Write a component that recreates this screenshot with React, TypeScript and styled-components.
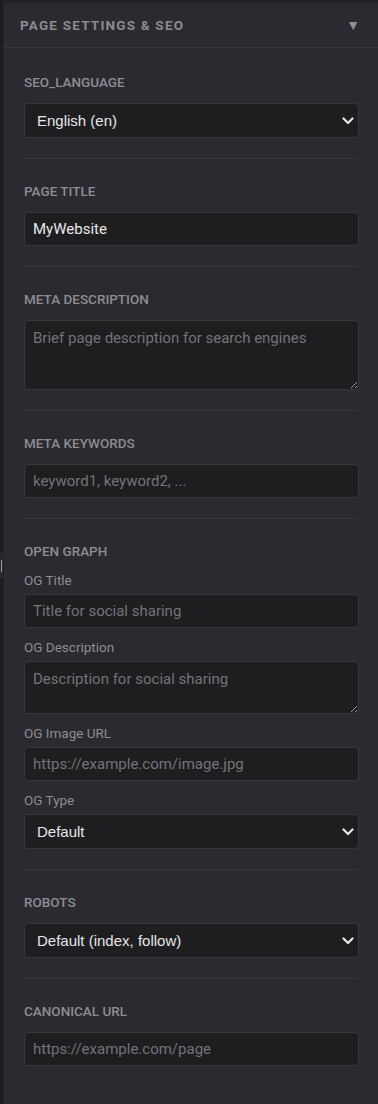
import React from "react";
import styled, { createGlobalStyle } from "styled-components";

const GlobalStyle = createGlobalStyle`
  html, body {
    margin: 0;
    padding: 0;
    background: #1d1d21;
  }

  * {
    box-sizing: border-box;
  }
`;

const Shell = styled.div`
  display: flex;
  min-height: 1104px;
  font-family: Roboto, "Liberation Sans", sans-serif;
`;

const Gutter = styled.div`
  width: 4px;
  flex-shrink: 0;
  background: #1d1d21;
  border-right: 1px solid #232328;
  display: flex;
  flex-direction: column;
`;

const GutterHandle = styled.div`
  margin-top: 553px;
  height: 25px;
  background: #2a2a2f;
  display: flex;
  justify-content: center;
  align-items: center;

  &::after {
    content: "";
    width: 1px;
    height: 12px;
    background: #9a9a9e;
  }
`;

const Panel = styled.div`
  flex: 1;
  background: #2a2a30;
  border-top: 3px solid #232327;
`;

const Header = styled.div`
  height: 45px;
  padding: 0 16px;
  display: flex;
  align-items: center;
  justify-content: space-between;
  border-bottom: 1px solid #37373d;
`;

const HeaderTitle = styled.div`
  font-size: 13.5px;
  font-weight: 700;
  letter-spacing: 1.2px;
  color: #8b8b90;
  text-transform: uppercase;
`;

const Caret = styled.span`
  font-size: 14px;
  color: #8e8e93;
  margin-right: 2px;
`;

const Body = styled.div`
  padding: 2px 19px 0 20px;
`;

const Section = styled.div<{ $last?: boolean }>`
  padding: 24px 0 20px;
  border-bottom: ${({ $last }) => ($last ? "none" : "1px solid #37373d")};
  display: flex;
  flex-direction: column;
`;

const Label = styled.div`
  font-size: 13.5px;
  line-height: 16px;
  font-weight: 500;
  color: #8d8d92;
  text-transform: uppercase;
  margin-bottom: 13px;
`;

const Field = styled.div`
  display: flex;
  flex-direction: column;

  & + & {
    margin-top: 11px;
  }
`;

const SubLabel = styled.div`
  font-size: 13.5px;
  line-height: 16px;
  color: #8d8d92;
  margin-bottom: 6px;
`;

const inputBase = `
  width: 100%;
  background: #1e1e21;
  border: 1px solid #38383e;
  border-radius: 4px;
  color: #e8e8ea;
  font-family: Roboto, "Liberation Sans", sans-serif;
  font-size: 15px;
  padding: 0 8px;
  outline: none;

  &::placeholder {
    color: #737378;
  }
`;

const TextInput = styled.input`
  ${inputBase}
  height: 34px;
`;

const TextArea = styled.textarea<{ $rows: number }>`
  ${inputBase}
  height: ${({ $rows }) => ($rows > 2 ? "70px" : "53px")};
  padding: 7px 8px;
  line-height: 20px;
  resize: vertical;
  display: block;
`;

const SelectWrap = styled.div`
  position: relative;
`;

const Select = styled.select`
  ${inputBase}
  height: 35px;
  appearance: none;
  -webkit-appearance: none;
  font-family: "Liberation Sans", Arial, sans-serif;
  font-size: 15px;
  padding: 0 30px 0 12px;
  color: #e6e6e8;
`;

const Chevron = styled.svg`
  position: absolute;
  right: 5px;
  top: 50%;
  margin-top: -5px;
  pointer-events: none;
`;

const SelectBox = ({ value, options }: { value: string; options: string[] }) => (
  <SelectWrap>
    <Select defaultValue={value}>
      {options.map((o) => (
        <option key={o}>{o}</option>
      ))}
    </Select>
    <Chevron width="12" height="10" viewBox="0 0 12 10">
      <path d="M1.5 2.5 L6 7 L10.5 2.5" fill="none" stroke="#e8e8ea" strokeWidth="2.2" strokeLinecap="round" strokeLinejoin="round" />
    </Chevron>
  </SelectWrap>
);

export default function App() {
  return (
    <>
      <GlobalStyle />
      <Shell>
        <Gutter>
          <GutterHandle />
        </Gutter>
        <Panel>
          <Header>
            <HeaderTitle>Page Settings &amp; SEO</HeaderTitle>
            <Caret>▼</Caret>
          </Header>
          <Body>
            <Section>
              <Label>SEO_LANGUAGE</Label>
              <SelectBox value="English (en)" options={["English (en)", "Deutsch (de)", "Français (fr)"]} />
            </Section>

            <Section>
              <Label>Page Title</Label>
              <TextInput defaultValue="MyWebsite" />
            </Section>

            <Section>
              <Label>Meta Description</Label>
              <TextArea $rows={3} placeholder="Brief page description for search engines" />
            </Section>

            <Section>
              <Label>Meta Keywords</Label>
              <TextInput placeholder="keyword1, keyword2, ..." />
            </Section>

            <Section>
              <Label>Open Graph</Label>
              <Field>
                <SubLabel>OG Title</SubLabel>
                <TextInput placeholder="Title for social sharing" />
              </Field>
              <Field>
                <SubLabel>OG Description</SubLabel>
                <TextArea $rows={2} placeholder="Description for social sharing" />
              </Field>
              <Field>
                <SubLabel>OG Image URL</SubLabel>
                <TextInput placeholder="https://example.com/image.jpg" />
              </Field>
              <Field>
                <SubLabel>OG Type</SubLabel>
                <SelectBox value="Default" options={["Default", "website", "article"]} />
              </Field>
            </Section>

            <Section>
              <Label>Robots</Label>
              <SelectBox value="Default (index, follow)" options={["Default (index, follow)", "noindex, nofollow"]} />
            </Section>

            <Section $last>
              <Label>Canonical URL</Label>
              <TextInput placeholder="https://example.com/page" />
            </Section>
          </Body>
        </Panel>
      </Shell>
    </>
  );
}
